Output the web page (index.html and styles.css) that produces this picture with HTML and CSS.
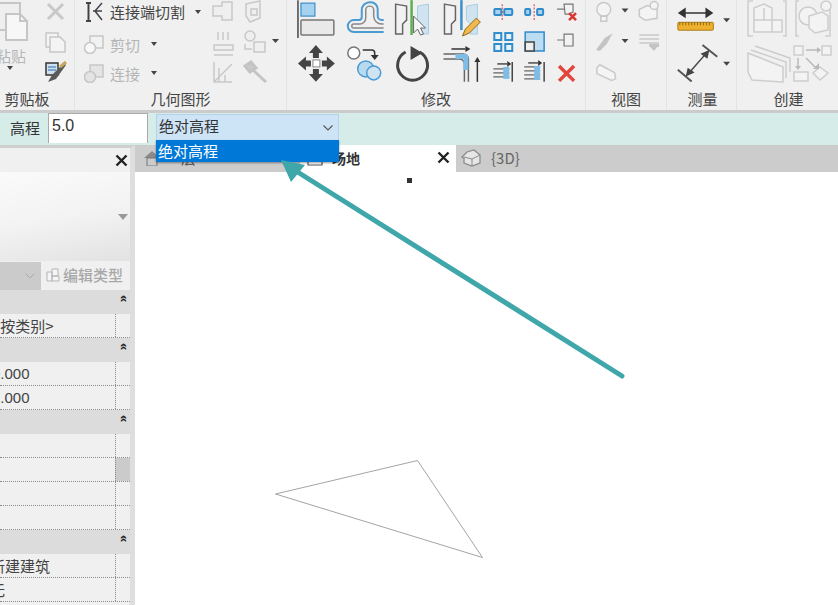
FILE: index.html
```html
<!DOCTYPE html>
<html lang="zh">
<head>
<meta charset="utf-8">
<title>场地</title>
<link rel="stylesheet" href="styles.css">
</head>
<body>
<div class="app">
  <header class="ribbon">
    <section class="panel p-clip">
      <div class="panel-body">
        <div class="paste">
          <svg width="30" height="46" viewBox="0 0 30 46"><g fill="#efefef" stroke="#c6c6c6" stroke-width="2"><path d="M-4 3H20V30H-4Z"/><path d="M6 14H20L27 21V40H6Z" fill="#f7f7f7"/><path d="M20 14V21H27" fill="none"/></g></svg>
          <span class="paste-label">粘贴</span>
          <i class="caret paste-caret"></i>
        </div>
        <svg class="tools" width="44" height="88" viewBox="30 0 44 88">
          <g stroke="#c8c8c8" stroke-width="3" fill="none"><path d="M48 4L63 19M63 4L48 19"/></g>
          <g fill="#f4f4f4" stroke="#c6c6c6" stroke-width="1.500"><path d="M46 33H58V47H46Z"/><path d="M50 37H60L65 42V52H50Z"/></g>
          <path d="M46 63H58V75H46Z" fill="#cfe0f0" stroke="#333" stroke-width="1.500"/><path d="M48 67H56M48 70H56" stroke="#2b6ca8" stroke-width="1.200"/>
          <path d="M48 82L52 75L64 63L66 65L56 79Z" fill="#5a5a5a"/><path d="M60 67L66 62" stroke="#c9a65a" stroke-width="3"/>
        </svg>
      </div>
      <div class="panel-title t-clip">剪贴板</div>
    </section>
    <section class="panel p-geo">
      <div class="panel-body">
        <div class="geo-list">
          <div class="geo-row">
            <svg width="20" height="20" viewBox="0 0 20 20"><path d="M2 1H7M4.500 1V19M2 19H7" stroke="#444" stroke-width="2" fill="none"/><path d="M18 1L11 9L18 18M18 9H9" stroke="#444" stroke-width="1.500" fill="none"/></svg>
            <span>连接端切割</span><i class="caret caret-gap"></i>
          </div>
          <div class="geo-row off">
            <svg width="20" height="20" viewBox="0 0 20 20"><path d="M6 2H19V14H6Z" fill="#f2f2f2" stroke="#c6c6c6" stroke-width="1.500"/><circle cx="6" cy="14" r="5.500" fill="#f8f8f8" stroke="#c6c6c6" stroke-width="1.500"/></svg>
            <span>剪切</span><i class="caret caret-gap2"></i>
          </div>
          <div class="geo-row off">
            <svg width="20" height="20" viewBox="0 0 20 20"><path d="M6 2H19V14H6Z" fill="#e4e4e4" stroke="#c6c6c6" stroke-width="1.500"/><circle cx="6" cy="14" r="5.500" fill="#e4e4e4" stroke="#c6c6c6" stroke-width="1.500"/></svg>
            <span>连接</span><i class="caret caret-gap2"></i>
          </div>
        </div>
        <svg class="tools" width="75" height="88" viewBox="212 0 75 88">
          <g fill="#efefef" stroke="#c8c8c8" stroke-width="1.500">
            <path d="M213 6H222V2H232V20H222V16H213Z"/>
            <path d="M246 4L260 1V18L250 22L246 16Z"/><path d="M251 9H257V15H251Z"/>
            <path d="M214 45H233V50H214Z"/><path d="M218 32V40M223 32V40M228 32V40M214 55H233" fill="none"/>
            <circle cx="250" cy="36" r="5"/><path d="M254 42H265V52H254Z"/><path d="M245 44V49H252" fill="none"/>
            <path d="M214 62V82H232M214 82L232 64M219 68V82M225 75V82" fill="none"/>
          </g>
          <path d="M245 66L251 62L256 68L250 72ZM253 70L266 82" fill="#c9c9c9" stroke="#c4c4c4" stroke-width="3"/>
          <path d="M272 39H279L275.500 43Z" fill="#444"/>
        </svg>
      </div>
      <div class="panel-title">几何图形</div>
    </section>
    <section class="panel p-mod">
      <div class="panel-body">
        <svg width="299" height="88" viewBox="287 0 299 88">
          <path d="M298 0V38" stroke="#444" stroke-width="1.500"/>
          <rect x="301" y="3" width="14" height="13" fill="#a5d3ef" stroke="#3d8fc9" stroke-width="1.200"/>
          <rect x="301" y="20" width="33" height="15" rx="1" fill="#e9e9e9" stroke="#777" stroke-width="1.500"/>
          <path d="M384 32H354a5 5 0 0 1 0-12h5a3 3 0 0 0 3-3V10a8 8 0 0 1 8-8h1a7 7 0 0 1 7 7v7a4 4 0 0 0 4 4h2" fill="none" stroke="#4a9bd4" stroke-width="2"/>
          <path d="M384 28H354a2 2 0 0 1 0-4h6a6 6 0 0 0 6-6V10a4 4 0 0 1 8 0v6a8 8 0 0 0 8 8h2" fill="none" stroke="#888" stroke-width="1.500"/>
          <path d="M396 4L407 6V20L403 24V34H396Z" fill="#f2f2f2" stroke="#666" stroke-width="1.500"/>
          <path d="M429 4L418 6V20L422 24V34H429Z" fill="#cfe4f0" stroke="#a8cde0"/>
          <path d="M412 0V35" stroke="#5cb04a" stroke-width="2.500"/>
          <path d="M414 16V33L418 29L421 35L424 34L421 28L426 28Z" fill="#f5f5f5" stroke="#666"/>
          <path d="M445 4L456 6V20L452 24V34H445Z" fill="#f2f2f2" stroke="#666" stroke-width="1.500"/>
          <path d="M478 4L467 6V20L471 24V34H478Z" fill="#cfe4f0" stroke="#a8cde0"/>
          <path d="M462 0V30" stroke="#3d8fc9" stroke-width="2.500"/>
          <path d="M463 36L466 29L477 18L481 22L470 33Z" fill="#f2b84b" stroke="#8a6a20"/>
          <g fill="#444">
            <path d="M316 45L323 53H319V58H313V53H309Z"/><path d="M316 82L323 74H319V69H313V74H309Z"/>
            <path d="M298 63.500L306 56.500V60.500H311V66.500H306V70.500Z"/><path d="M335 63.500L327 56.500V60.500H322V66.500H327V70.500Z"/>
          </g>
          <rect x="313" y="60" width="7" height="7" fill="#fff" stroke="#888"/>
          <circle cx="354" cy="53" r="6" fill="#fff" stroke="#777" stroke-width="1.500"/>
          <path d="M363 50H372a3 3 0 0 1 3 3V56" fill="none" stroke="#333" stroke-width="1.500"/><path d="M371 55H379L375 60Z" fill="#333"/>
          <circle cx="366" cy="69" r="8" fill="#b9d9ef" stroke="#4a9bd4" stroke-width="1.500"/>
          <circle cx="374" cy="73" r="7" fill="#cfe4f3" stroke="#4a9bd4" stroke-width="1.500"/>
          <path d="M406 52A15 15 0 1 0 420 52" fill="none" stroke="#444" stroke-width="3"/><path d="M411 46L423 53L411 60Z" fill="#444"/>
          <path d="M444 54H464a5 5 0 0 1 5 5V82M444 59H460a5 5 0 0 1 5 5V82" fill="none" stroke="#666" stroke-width="1.500"/>
          <path d="M456 54H466a3 3 0 0 1 3 3V70H464V59H456Z" fill="#7fbce6"/>
          <path d="M452 49H466" stroke="#333" stroke-width="1.500"/><path d="M466 46L471 49L466 52Z" fill="#333"/>
          <path d="M478 82V62" stroke="#333" stroke-width="1.500"/><path d="M475 62L478 57L481 62Z" fill="#333"/>
          <g fill="#a9d2ee" stroke="#2f8ccb" stroke-width="2">
            <rect x="495" y="9" width="7" height="6" rx="1"/><rect x="505" y="9" width="8" height="6" rx="1"/>
            <rect x="526" y="9" width="5" height="6" rx="1"/><rect x="538" y="9" width="6" height="6" rx="1"/>
            <rect x="495" y="33" width="7" height="7" fill="#e8f2f9"/><rect x="506" y="33" width="7" height="7" fill="#e8f2f9"/><rect x="495" y="44" width="7" height="7" fill="#e8f2f9"/><rect x="506" y="44" width="7" height="7" fill="#e8f2f9"/>
          </g>
          <path d="M503 4V20M535 4V20" stroke="#d9534f" stroke-width="1.200" stroke-dasharray="2 1.500"/>
          <rect x="526" y="32" width="19" height="19" fill="#bcdcf2" stroke="#2f8ccb" stroke-width="1.500"/><rect x="526" y="42" width="9" height="9" fill="#eee" stroke="#444" stroke-width="1.500"/>
          <g fill="#f2f2f2" stroke="#777" stroke-width="1.200">
            <path d="M565 4H574V12L570 14H566ZM558 9H565"/>
            <path d="M565 34H574V46H565ZM558 40H565"/>
          </g>
          <path d="M570 13L577 20M577 13L570 20" stroke="#d9362f" stroke-width="2.500"/>
          <path d="M560 66L575 81M575 66L560 81" stroke="#e2453c" stroke-width="3.500"/>
          <g fill="none">
            <path d="M494 69H510M494 73H510M494 77H510" stroke="#666" stroke-width="1.300"/><path d="M504 67H510V79H504Z" fill="#7fbce6"/><path d="M513 62V82" stroke="#444" stroke-width="1.500"/><path d="M498 64H508" stroke="#333" stroke-width="1.300"/>
            <path d="M525 67H541M525 71H541M525 75H541M525 79H541" stroke="#666" stroke-width="1.300"/><path d="M535 66H541V80H535Z" fill="#7fbce6"/><path d="M545 62V82" stroke="#444" stroke-width="1.500"/><path d="M529 63H539" stroke="#333" stroke-width="1.300"/>
          </g>
          <path d="M508 61L512 64L508 67ZM539 60L543 63L539 66Z" fill="#333"/>
        </svg>
      </div>
      <div class="panel-title">修改</div>
    </section>
    <section class="panel p-view">
      <div class="panel-body">
        <svg width="81" height="88" viewBox="586 0 81 88">
          <g fill="#f4f4f4" stroke="#c8c8c8" stroke-width="1.500">
            <circle cx="604" cy="9" r="7"/><path d="M601 16H607V21H601Z"/>
            <path d="M640 9L648 5L658 8V18L646 20L640 16Z"/><circle cx="655" cy="5" r="4"/>
            <path d="M597 68L600 65L615 73L616 79L612 81L597 74Z"/>
          </g>
          <path d="M596 50L605 38L613 33L607 44L600 51Z" fill="#c4c4c4"/>
          <path d="M640 35H660M640 39H660M640 43H660" stroke="#c8c8c8" stroke-width="1.500"/><path d="M650 44H660V47H658L655 51L651 47H650Z" fill="#c4c4c4"/>
          <path d="M622 8H629L625.500 12ZM622 39H629L625.500 43Z" fill="#444"/>
        </svg>
      </div>
      <div class="panel-title">视图</div>
    </section>
    <section class="panel p-meas">
      <div class="panel-body">
        <svg width="70" height="88" viewBox="667 0 70 88">
          <path d="M680 12.500H712" stroke="#333" stroke-width="1.500"/><path d="M678 12.500L686 7V18ZM714 12.500L706 7V18Z" fill="#333"/>
          <rect x="678" y="22" width="36" height="8" rx="1" fill="#efb02e" stroke="#a97b17"/><path d="M680 22v3M683 22v3M686 22v3M689 22v3M692 22v3M695 22v3M698 22v3M701 22v3M704 22v3M707 22v3M710 22v3" stroke="#7a5a10" stroke-width=".8"/>
          <path d="M724 18H731L727.500 22Z" fill="#444"/>
          <path d="M678 70L692 82M703 45L718 57" stroke="#555" stroke-width="2"/>
          <path d="M688 75L708 52" stroke="#444" stroke-width="1.500"/><path d="M686 77L688 68L695 73ZM710 50L708 59L701 54Z" fill="#444"/>
          <path d="M724 62H731L727.500 66Z" fill="#444"/>
        </svg>
      </div>
      <div class="panel-title t-meas">测量</div>
    </section>
    <section class="panel p-create">
      <div class="panel-body">
        <svg width="101" height="88" viewBox="737 0 101 88">
          <g fill="#f3f3f3" stroke="#cdcdcd" stroke-width="1.500">
            <path d="M753 1H748V36H753M783 1H786V36H783" fill="none"/>
            <path d="M754 8L764 4L772 8V20H782V32H754Z"/><path d="M754 20H772V32M764 8V20" fill="none"/>
            <path d="M799 1H796V36H799M827 8H830V36H825" fill="none"/>
            <circle cx="808" cy="16" r="9"/><path d="M809 16L822 12L828 16V30L815 33L809 28Z"/><circle cx="826" cy="6" r="5"/>
            <path d="M748 53L783 67V82L752 80L748 72Z"/><path d="M751 50L786 62V78M755 46L790 58V72" fill="none"/>
            <rect x="794" y="46" width="9" height="9"/><rect x="822" y="46" width="9" height="9"/><rect x="794" y="72" width="14" height="9"/><path d="M820 67L828 73L820 80L813 73Z"/>
          </g>
          <path d="M806 50H818M798 58V68M806 58L816 68" stroke="#b9b9b9" stroke-width="1.500"/>
          <path d="M817 47L821 50L817 53ZM795 66H801L798 70ZM813 69H819V63Z" fill="#b9b9b9"/>
        </svg>
      </div>
      <div class="panel-title t-meas">创建</div>
    </section>
  </header>

  <div class="optbar">
    <label class="opt-label" for="elev">高程</label>
    <input class="opt-input" id="elev" value="5.0">
    <div class="combo">
      <div class="combo-head">
        <span class="combo-text">绝对高程</span>
        <svg width="10" height="6" viewBox="0 0 10 6"><path d="M.5 .5L5 5L9.500 .5" fill="none" stroke="#555" stroke-width="1.100"/></svg>
      </div>
      <div class="combo-list">绝对高程</div>
    </div>
  </div>

  <main class="main">
    <aside class="props">
      <div class="props-title"><svg width="13" height="13" viewBox="0 0 13 13"><path d="M1.500 1.500L11.500 11.500M11.500 1.500L1.500 11.500" stroke="#222" stroke-width="2.400"/></svg></div>
      <div class="preview"><i class="preview-caret"></i></div>
      <div class="type-row">
        <div class="type-select"><svg width="10" height="6" viewBox="0 0 10 6"><path d="M.5 .5L5 5L9.500 .5" fill="none" stroke="#aaa"/></svg></div>
        <div class="edit-type">
          <svg width="14" height="14" viewBox="0 0 14 14"><path d="M1 4H6V13H1ZM6 8H13V13H6ZM6 1H12V8H6Z" fill="#f5f5f5" stroke="#b5b5b5"/></svg>
          <span>编辑类型</span>
        </div>
      </div>
      <div class="sec"><b>»</b></div>
      <div class="row"><span class="val v-cat">&lt;按类别&gt;</span><i class="cell"></i></div>
      <div class="sec"><b>»</b></div>
      <div class="row"><span class="val v-num">0.000</span><i class="cell"></i></div>
      <div class="row"><span class="val v-num">1.000</span><i class="cell"></i></div>
      <div class="sec"><b>»</b></div>
      <div class="row"><i class="cell"></i></div>
      <div class="row"><i class="cell thumb"></i></div>
      <div class="row"><i class="cell"></i></div>
      <div class="row"><i class="cell"></i></div>
      <div class="sec"><b>»</b></div>
      <div class="row"><span class="val v-new">新建建筑</span><i class="cell"></i></div>
      <div class="row"><span class="val v-none">无</span><i class="cell"></i></div>
    </aside>
    <div class="view">
      <nav class="tabs">
        <div class="tab t-one">
          <svg width="18" height="16" viewBox="0 0 18 16"><path d="M1 8L9 1L17 8Z" fill="#8a8a8a"/><path d="M4 8H14V16H4Z" fill="none" stroke="#777"/></svg>
          <span>一层</span>
        </div>
        <div class="tab t-site">
          <svg width="18" height="16" viewBox="0 0 18 16"><path d="M2 6H16V15H2Z" fill="#fff" stroke="#555" stroke-width="1.200"/></svg>
          <span>场地</span>
          <svg class="tab-x" width="13" height="13" viewBox="0 0 13 13"><path d="M1.500 1.500L11.500 11.500M11.500 1.500L1.500 11.500" stroke="#222" stroke-width="2.400"/></svg>
        </div>
        <div class="tab t-3d">
          <svg width="20" height="18" viewBox="0 0 20 18"><path d="M1 8L6 3L13 1L19 6V14L11 17L3 14V9Z" fill="#e6e6e6" stroke="#8a8a8a" stroke-width="1.300"/><path d="M3 8L11 10L19 6M11 10V17" fill="none" stroke="#8a8a8a"/></svg>
          <span>{3D}</span>
        </div>
      </nav>
      <div class="canvas">
        <i class="handle"></i>
        <svg class="sketch" width="220" height="110" viewBox="270 455 220 110"><path d="M275.500 494L417.500 460.500L482.500 557.500Z" fill="none" stroke="#8d8d8d" stroke-width=".8"/></svg>
      </div>
    </div>
  </main>

  <svg class="arrow" width="838" height="605" viewBox="0 0 838 605">
    <path d="M622 376L296 171" stroke="#3fa7aa" stroke-width="5" stroke-linecap="round"/>
    <path d="M281 160L305 165L291 182Z" fill="#3fa7aa"/>
  </svg>
</div>
</body>
</html>
```

FILE: styles.css
```css
* { box-sizing: border-box; }
html, body { margin: 0; padding: 0; }
body { font-family: "Noto Sans CJK SC", "Liberation Sans", sans-serif; background: #fff; color: #333; }
.app { position: relative; width: 838px; height: 605px; overflow: hidden; display: flex; flex-direction: column; }

/* ribbon */
.ribbon { display: flex; height: 113px; background: #f0f0f0; border-bottom: 3px solid #cbcbcb; flex: none; }
.panel { display: flex; flex-direction: column; border-right: 1px solid #dfe7e5; flex: none; }
.panel-body { display: flex; height: 88px; overflow: hidden; }
.panel-title { height: 22px; line-height: 22px; font-size: 15px; color: #444; text-align: center; }
.p-clip { width: 75px; }
.p-geo { width: 212px; }
.p-mod { width: 299px; }
.p-view { width: 81px; }
.p-meas { width: 70px; }
.p-create { flex: 1; border-right: 0; }
.t-clip { padding-right: 20px; }
.t-meas { padding-left: 2px; }
.tools { flex: none; }
.paste { width: 30px; display: flex; flex-direction: column; flex: none; }
.paste svg { display: block; flex: none; }
.paste-label { font-size: 15px; line-height: 20px; margin-left: -4px; color: #b5b5b5; white-space: nowrap; }
.caret { display: block; width: 0; height: 0; border-style: solid; border-width: 4px 3.500px 0; border-color: #444 transparent transparent; flex: none; }
.paste-caret { margin: 0 0 0 7px; }
.geo-list { width: 137px; padding-left: 9px; flex: none; display: flex; flex-direction: column; }
.geo-row { display: flex; align-items: center; height: 30px; font-size: 15px; color: #444; white-space: nowrap; }
.geo-row:first-child { height: 24px; margin-bottom: 6px; }
.geo-row svg { flex: none; margin-right: 6px; }
.geo-row.off { color: #b5b5b5; }
.caret-gap { margin-left: 10px; }
.caret-gap2 { margin-left: 11px; }

/* option bar */
.optbar { height: 32px; background: #d6ece8; display: flex; align-items: flex-start; padding: 0 0 0 10px; flex: none; position: relative; }
.opt-label { font-size: 15px; line-height: 30px; color: #333; width: 38px; flex: none; }
.opt-input { width: 100px; height: 30px; margin: 0; border: 1px solid #aaa; border-width: 1px 1px 0; background: #fff; font: 16px "Liberation Sans", sans-serif; padding: 0 0 6px 3px; color: #333; flex: none; }
.combo { width: 183px; margin-left: 8px; margin-top: 1px; position: relative; flex: none; z-index: 2; }
.combo-head { height: 28px; background: #cde4f7; border: 1px solid #b6d2e8; display: flex; align-items: center; justify-content: space-between; padding: 0 5px 0 2px; font-size: 15px; color: #333; }
.combo-text { margin-top: -5px; }
.combo-list { position: absolute; left: 0; right: 0; top: 26px; height: 22px; line-height: 21px; background: #0078d7; color: #fff; font-size: 15px; padding-left: 2px; box-shadow: 0 1px 2px rgba(0,0,0,.4); }

/* main */
.main { flex: 1; display: flex; min-height: 0; background: #fff; }
.props { width: 135px; background: #f0f0f0; border-top: 3px solid #cfcfcf; border-right: 5px solid #dedede; flex: none; display: flex; flex-direction: column; overflow: hidden; }
.props-title { height: 24px; display: flex; align-items: center; justify-content: flex-end; padding-right: 2px; flex: none; }
.preview { height: 89px; flex: none; position: relative; background: linear-gradient(170deg, #fafafa 0%, #f3f3f3 50%, #e2e2e2 100%); }
.preview-caret { position: absolute; right: 2px; top: 42px; width: 0; height: 0; border-style: solid; border-width: 6px 5px 0; border-color: #999 transparent transparent; }
.type-row { height: 29px; display: flex; flex: none; }
.type-select { width: 41px; margin-top: 1px; background: #cbcbcb; display: flex; align-items: center; justify-content: flex-end; padding-right: 6px; flex: none; }
.edit-type { display: flex; align-items: center; gap: 3px; padding-left: 5px; padding-bottom: 2px; font-size: 15px; font-weight: 500; color: #a8a8a8; white-space: nowrap; flex: none; }
.sec { height: 24px; background: #dcdcdc; display: flex; justify-content: flex-end; padding-right: 3px; flex: none; }
.sec b { display: block; transform: rotate(-90deg); font-size: 13px; line-height: 13px; height: 13px; width: 10px; text-align: center; margin-top: 2px; font-family: "Liberation Sans", sans-serif; color: #222; }
.row { height: 24px; display: flex; justify-content: flex-end; align-items: center; border-bottom: 1px dotted #8c8c8c; position: relative; flex: none; font-size: 15px; color: #444; white-space: nowrap; }
.val { margin-right: auto; line-height: 23px; }
.v-cat { margin-left: -8px; }
.v-num { margin-left: -8px; font-family: "Liberation Sans", sans-serif; font-size: 15px; }
.v-new { margin-left: -10px; }
.v-none { margin-left: -10px; }
.cell { width: 15px; height: 100%; border-left: 1px dotted #8c8c8c; flex: none; display: block; }
.thumb { background: #cbcbcb; }

/* tabs */
.view { flex: 1; display: flex; flex-direction: column; min-width: 0; }
.tabs { height: 27px; background: #cccccc; display: flex; flex: none; }
.tab { display: flex; align-items: center; height: 100%; padding-bottom: 2px; font-size: 15px; white-space: nowrap; flex: none; }
.tab svg { flex: none; }
.t-one { width: 165px; padding-left: 8px; gap: 5px; color: #555; }
.t-site { width: 156px; background: #fff; padding-left: 6px; gap: 8px; font-weight: 700; color: #333; font-size: 14px; }
.tab-x { margin-left: auto; margin-right: 6px; }
.t-3d { padding-left: 5px; gap: 10px; color: #666; }
.canvas { flex: 1; position: relative; background: #fff; }
.handle { position: absolute; left: 272px; top: 6px; width: 5px; height: 5px; background: #333; }
.sketch { position: absolute; left: 135px; top: 283px; }
.arrow { position: absolute; left: 0; top: 0; pointer-events: none; z-index: 5; }
```
